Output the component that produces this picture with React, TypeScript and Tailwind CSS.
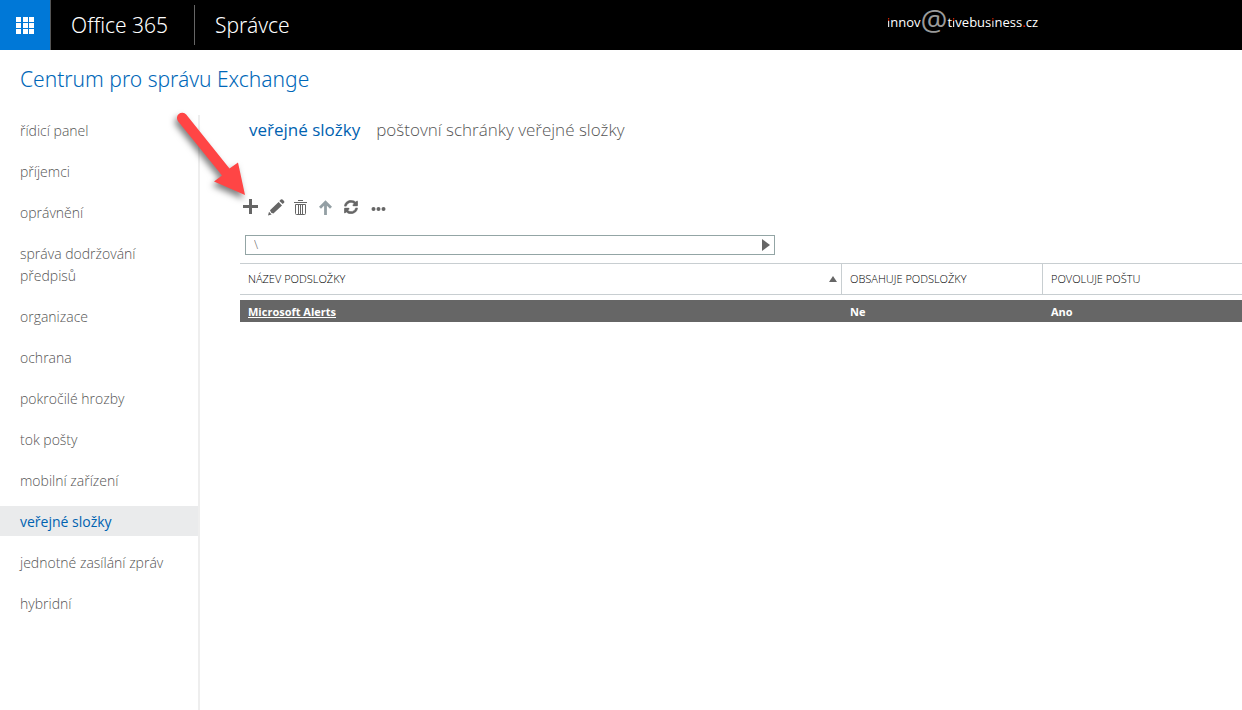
import { useState } from 'react';
import { FaSyncAlt } from 'react-icons/fa';

const menu = [
  'řídicí panel',
  'příjemci',
  'oprávnění',
  'správa dodržování předpisů',
  'organizace',
  'ochrana',
  'pokročilé hrozby',
  'tok pošty',
  'mobilní zařízení',
  'veřejné složky',
  'jednotné zasílání zpráv',
  'hybridní',
];

const folders = [{ name: 'Microsoft Alerts', hasSubfolders: 'Ne', mailEnabled: 'Ano' }];

// the letter i with its dot in red
function RedDot() {
  return (
    <span className="bg-linear-to-b from-[#ff2a00] from-45% to-white to-45% bg-clip-text text-transparent">i</span>
  );
}

function Logo() {
  return (
    <a href="#" className="flex items-center text-[13px] leading-5 font-medium text-white">
      <span><RedDot />nnov</span>
      <span className="-mt-1 text-[30px] leading-5 font-normal text-[#9a9a9a]">@</span>
      <span>t<RedDot />vebus<RedDot />ness<span className="text-[#ff2a00]">.</span>cz</span>
    </a>
  );
}

function Header() {
  return (
    <header className="flex h-[50px] items-center bg-black text-[21px] text-white">
      <button type="button" aria-label="Spouštěč aplikací" className="flex h-full w-[51px] items-center justify-center border-r border-[#555] bg-[#0078d7]">
        <svg width="18" height="17" viewBox="0 0 18 17" fill="#fff">
          {[0, 6, 12].map((y) =>
            [0, 7, 13].map((x) => <rect key={`${x}-${y}`} x={x} y={y} width="5" height="5" />)
          )}
        </svg>
      </button>
      <a href="#" className="w-[143px] px-5 pt-0.5 font-['Noto_Sans','Open_Sans',sans-serif]">Office 365</a>
      <span className="h-10 w-px bg-[#666]" />
      <a href="#" className="px-5 pt-0.5 font-['Noto_Sans','Open_Sans',sans-serif]">Správce</a>
      <div className="ml-auto pr-[204px] pb-1.5">
        <Logo />
      </div>
    </header>
  );
}

function Toolbar() {
  return (
    <div className="flex h-5 items-center text-[#666]">
      <button type="button" aria-label="Nová" className="w-[25px]">
        <svg width="16" height="16" viewBox="0 0 16 16" fill="currentColor">
          <path d="M6 0h3v6h6v3H9v6H6V9H0V6h6z" />
        </svg>
      </button>
      <button type="button" aria-label="Upravit" className="w-[26px]">
        <svg width="17" height="17" viewBox="0 0 17 17" fill="currentColor">
          <path d="M2 11.200 10.600 3l3.400 3.400-8.600 8.200-2.200-.8zM0 16.600l1-3.800 2.600 2.600z" />
          <path d="m11.400 2 1.400-1.400q.9-.7 1.700 0l1.500 1.500q.7.900 0 1.700l-1.300 1.300z" />
        </svg>
      </button>
      <button type="button" aria-label="Odstranit" className="w-[25px]">
        <svg width="13" height="15" viewBox="0 0 13 15" fill="none" stroke="currentColor">
          <path d="M0 2.500h13M4 .5h5M1.500 4.500h10v9q0 1-1 1h-8q-1 0-1-1zM4.500 5v9M6.500 5v9M8.500 5v9" />
        </svg>
      </button>
      <button type="button" aria-label="Nahoru" className="w-[25px] text-[#939fa4]">
        <svg width="13" height="15" viewBox="0 0 13 15" fill="none" stroke="currentColor" strokeWidth="2.800">
          <path d="M6.500 15V2M1 7.800l5.500-5.600L12 7.800" />
        </svg>
      </button>
      <button type="button" aria-label="Aktualizovat" className="w-[27px]">
        <FaSyncAlt size={14} stroke="currentColor" strokeWidth={16} />
      </button>
      <button type="button" aria-label="Další">
        <svg width="16" height="16" viewBox="0 0 16 16" fill="currentColor">
          <circle cx="2.500" cy="10" r="2" />
          <circle cx="7.500" cy="10" r="2" />
          <circle cx="12.500" cy="10" r="2" />
        </svg>
      </button>
    </div>
  );
}

function FolderTable() {
  return (
    <table className="mt-2 w-full table-fixed border-separate border-spacing-0 text-left text-[11px] text-black">
      <thead>
        <tr className="h-8">
          <th className="border-y border-r border-[#c8ced1] px-2 font-light">
            <span className="flex items-center justify-between">
              NÁZEV PODSLOŽKY
              <svg width="8" height="6" viewBox="0 0 8 6" fill="#666" className="-mr-1">
                <path d="M4 0l4 6H0z" />
              </svg>
            </span>
          </th>
          <th className="w-[201px] border-y border-r border-[#c8ced1] px-2 font-light">OBSAHUJE PODSLOŽKY</th>
          <th className="w-[199px] border-y border-[#c8ced1] px-2 font-light">POVOLUJE POŠTU</th>
        </tr>
      </thead>
      <tbody className="font-bold text-white before:block before:h-[5px] before:content-['']">
        {folders.map((folder) => (
          <tr key={folder.name} className="h-[22px] bg-[#666]">
            <td className="px-2 pt-0.5"><a href="#" className="underline">{folder.name}</a></td>
            <td className="px-2 pt-0.5">{folder.hasSubfolders}</td>
            <td className="px-2 pt-0.5">{folder.mailEnabled}</td>
          </tr>
        ))}
      </tbody>
    </table>
  );
}

function PointerArrow() {
  return (
    <svg width="90" height="100" viewBox="0 0 90 100" className="pointer-events-none absolute top-[108px] left-[170px] drop-shadow-[-2px_4px_3px_rgba(0,0,0,0.5)]">
      <path fill="#ff4545" d="M16.200 6.600 59.500 60.500 68 54.500 75 87 44 73.500 52 67.500 8.200 13.400A5.200 5.200 0 0 1 16.200 6.600z" />
    </svg>
  );
}

export default function App() {
  const [active, setActive] = useState('veřejné složky');
  const [path, setPath] = useState('\\');

  return (
    <div className="relative flex min-h-screen flex-col bg-white font-['Open_Sans',sans-serif] font-light">
      <Header />
      <h1 className="px-5 pt-[13px] pb-[19px] font-['Noto_Sans','Open_Sans',sans-serif] text-[21px] leading-[33px] font-light text-[#0067b8]">Centrum pro správu Exchange</h1>
      <div className="flex flex-1">
        <nav className="flex w-[200px] shrink-0 flex-col gap-[11px] border-r-2 border-[#eee] text-sm leading-[22px] text-[#555]">
          {menu.map((item) => (
            <a
              key={item}
              href="#"
              onClick={() => setActive(item)}
              className={item === active ? 'bg-[#eaebec] px-5 pt-[5px] pb-[3px] font-normal text-[#0062b1]' : 'px-5 pt-[5px] pb-[3px]'}
            >
              {item}
            </a>
          ))}
        </nav>
        <main className="min-w-0 flex-1 pl-10">
          <div className="flex gap-4 pt-px pl-[9px] text-[17px] leading-7">
            <a href="#" className="font-normal text-[#0062b1]">veřejné složky</a>
            <a href="#" className="text-[#555]">poštovní schránky veřejné složky</a>
          </div>
          <div className="mt-[53px] pl-[3px]">
            <Toolbar />
          </div>
          <form className="mt-[18px] ml-[5px] flex h-5 w-[530px] items-center border border-[#93a5a5]">
            <input
              aria-label="Cesta"
              value={path}
              onChange={(e) => setPath(e.target.value)}
              className="min-w-0 flex-1 px-2 text-xs text-[#666] outline-none"
            />
            <button type="button" aria-label="Přejít" className="px-1">
              <svg width="8" height="12" viewBox="0 0 8 12" fill="#666">
                <path d="M0 0l8 6-8 6z" />
              </svg>
            </button>
          </form>
          <FolderTable />
        </main>
      </div>
      <PointerArrow />
    </div>
  );
}
